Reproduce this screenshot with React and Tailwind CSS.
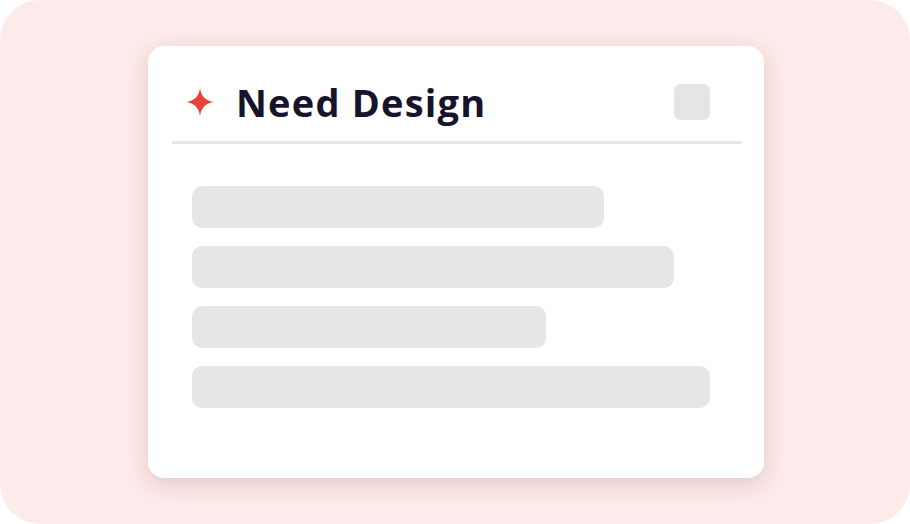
export default function App() {
  const bars = [412, 482, 354, 518];
  return (
    <div className="w-[910px] h-[524px] bg-white">
      <div className="w-full h-full rounded-[40px] bg-[#fdeaea] flex pl-[148px] pt-[46px]">
        <div className="w-[616px] h-[432px] bg-white rounded-[16px] shadow-[0_6px_22px_rgba(170,110,110,0.28)] flex flex-col">
          <div className="flex items-center pl-[38px] pr-[54px] pt-[38px] h-[74px]">
            <svg width="28" height="28" viewBox="0 0 28 28" className="shrink-0">
              <path d="M14 0 Q15.6 12.4 28 14 Q15.6 15.6 14 28 Q12.4 15.6 0 14 Q12.4 12.4 14 0Z" fill="#e8433a" />
            </svg>
            <div
              className="ml-[22px] text-[38px] leading-none font-bold text-[#16142b] tracking-[1.2px]"
              style={{ fontFamily: '"Open Sans", "Noto Sans", sans-serif' }}
            >
              Need Design
            </div>
            <div className="ml-auto w-[36px] h-[36px] rounded-[7px] bg-[#e4e5e7]" />
          </div>
          <div className="mt-[21px] ml-[24px] w-[570px] h-[3px] rounded-full bg-[#e5e6e8]" />
          <div className="mt-[42px] ml-[44px] flex flex-col gap-[18px]">
            {bars.map((w, i) => (
              <div key={i} className="h-[42px] rounded-[10px] bg-[#e5e6e8]" style={{ width: w }} />
            ))}
          </div>
        </div>
      </div>
    </div>
  );
}
